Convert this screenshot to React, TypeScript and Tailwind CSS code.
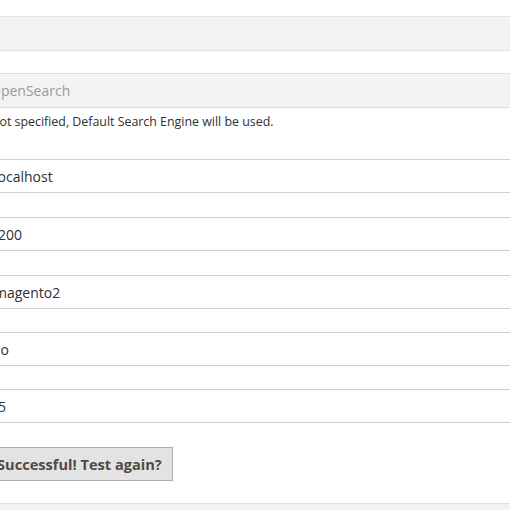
import React from "react";

const inputs = [
  { v: "localhost", pl: "pl-[14px]", mt: "mt-0" },
  { v: "9200", pl: "pl-[10px]", mt: "mt-[24px]" },
  { v: "magento2", pl: "pl-[14px]", mt: "mt-[24px]" },
  { v: "No", pl: "pl-[10px]", mt: "mt-[23px]" },
  { v: "15", pl: "pl-[10px]", mt: "mt-[23px]" },
];

export default function App() {
  return (
    <div className="w-[510px] h-[510px] overflow-hidden bg-white font-['Open_Sans',sans-serif] text-[#303030]">
      <div className="ml-[-20px] w-[560px] pt-[16px] flex flex-col">
        <div className="h-[35px] bg-[#f3f3f3] border-y border-[#e3e3e3]" />
        <div className="mt-[22px] h-[35px] bg-[#f3f3f3] border-y border-[#dedede] flex items-center pl-[10px] text-[14px] text-[#9a9a9a]">
          OpenSearch
        </div>
        <div className="pl-[1px] text-[12.4px] leading-[18px] mt-[5px] text-[#303030] whitespace-nowrap">
          If not specified, Default Search Engine will be used.
        </div>
        <div className="mt-[28px] flex flex-col">
          {inputs.map((it, i) => (
            <div
              key={i}
              className={`${it.mt} ${it.pl} h-[34px] border-y border-[#cfcfcf] flex items-center text-[14px] text-[#303030] whitespace-nowrap`}
            >
              {it.v}
            </div>
          ))}
        </div>
        <div className="mt-[24px] flex">
          <button className="ml-[6px] h-[34px] bg-[#e3e3e3] border border-[#adadad] pl-[10px] pr-[10px] text-[14.6px] font-bold text-[#514943] leading-none whitespace-nowrap">
            Successful! Test again?
          </button>
        </div>
        <div className="mt-[22px] h-[34px] bg-[#f3f3f3] border-t border-[#e3e3e3]" />
      </div>
    </div>
  );
}
